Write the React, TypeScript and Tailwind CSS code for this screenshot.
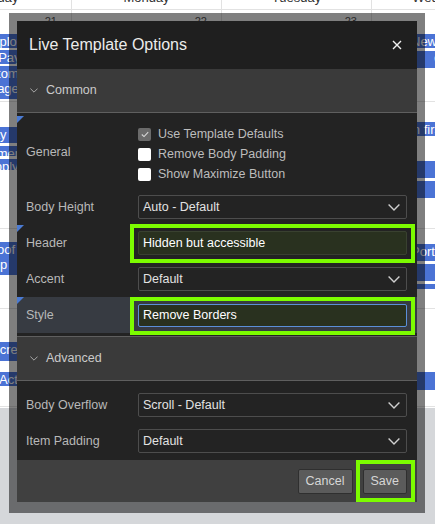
import React from 'react';

type Ev = { text: string; top: number; h: number; pl: number; lines?: string[] };

// week rows of the calendar behind the dialog, only the edges peek out
const weeks: { h: number; days: string[]; left: Ev[]; right: Ev[] }[] = [
    {
        h: 92,
        days: ['21', '22', '23', '24'],
        left: [
            { text: 'Employee', top: 10, h: 15, pl: 56 },
            { text: 'Unit of Pay', top: 1, h: 15, pl: 33 },
            { text: '', top: 1, h: 34, pl: 50, lines: ['Customer', 'Engaged'] },
        ],
        right: [
            { text: 'New Customer', top: 10, h: 15, pl: 37 },
            { text: 'Onboarding', top: 2, h: 18, pl: 60 },
        ],
    },
    {
        h: 127,
        days: ['28', '29', '30', '31'],
        left: [
            { text: 'Pay', top: 11, h: 17, pl: 60 },
            { text: 'Summer', top: 2, h: 11, pl: 46 },
            { text: 'Apply', top: 2, h: 12, pl: 62 },
        ],
        right: [
            { text: 'Sign first', top: 6, h: 15, pl: 20 },
            { text: 'Review', top: 24, h: 18, pl: 70 },
            { text: 'Update', top: 2, h: 18, pl: 70 },
        ],
    },
    {
        h: 80,
        days: ['4', '5', '6', '7'],
        left: [{ text: '', top: -1, h: 34, pl: 60, lines: ['Proof of n', 'App'] }],
        right: [
            { text: 'Portal', top: 1, h: 18, pl: 37 },
            { text: 'Launch', top: 2, h: 18, pl: 70 },
            { text: 'Meet', top: 2, h: 6, pl: 70 },
        ],
    },
    {
        h: 98,
        days: ['11', '12', '13', '14'],
        left: [
            { text: 'Screen', top: 19, h: 20, pl: 67 },
            { text: 'Action s', top: 10, h: 15, pl: 75 },
        ],
        right: [{ text: 'Renewal', top: 49, h: 19, pl: 70 }],
    },
];

const EventBar = ({ ev }: { ev: Ev }) => (
    <div
        className="mx-[2px] bg-[#4b73d5] text-white text-[13px] leading-[15px] overflow-hidden whitespace-nowrap border-b border-white"
        style={{ marginTop: ev.top, height: ev.h, paddingLeft: ev.pl }}
    >
        {ev.lines ? ev.lines.map((l) => <div key={l}>{l}</div>) : ev.text}
    </div>
);

const Calendar = () => (
    <div className="bg-white h-[408px] overflow-hidden">
        <div className="grid grid-cols-[150px_150px_150px_150px] ml-[-78px] h-[10px] overflow-hidden border-b border-[#e2e2e2]">
            {['Sunday', 'Monday', 'Tuesday', 'Wednesday'].map((d) => (
                <div key={d} className="border-r border-[#e2e2e2] text-center text-[13px] leading-[16px] text-[#333] -mt-[10px]">
                    {d}
                </div>
            ))}
        </div>
        {weeks.map((w, i) => (
            <div
                key={i}
                className="grid grid-cols-[150px_150px_150px_150px] ml-[-78px] border-b border-[#e2e2e2]"
                style={{ height: w.h }}
            >
                {[0, 1, 2, 3].map((c) => (
                    <div key={c} className="border-r border-[#e2e2e2] flex flex-col">
                        <div className="h-[14px] text-right pr-[14px] pt-[5px] text-[11px] leading-[12px] text-[#555]">{w.days[c]}</div>
                        {c === 0 && w.left.map((ev, k) => <EventBar key={k} ev={ev} />)}
                        {c === 3 && w.right.map((ev, k) => <EventBar key={k} ev={ev} />)}
                    </div>
                ))}
            </div>
        ))}
    </div>
);

const Chevron = ({ className }: { className: string }) => (
    <svg viewBox="0 0 12 7" className={className} fill="none" stroke="currentColor" strokeWidth="1.4">
        <path d="M0.6 0.6 L6 6 L11.4 0.6" />
    </svg>
);

const Marker = () => (
    <div className="absolute top-0 left-0 w-0 h-0 border-t-[7px] border-r-[7px] border-t-[#4b7bd3] border-r-transparent" />
);

const Highlight = () => (
    <div className="absolute -left-[8px] -right-[8px] -top-[7px] -bottom-[8px] border-4 border-[#7cfc00] pointer-events-none" />
);

const Select = ({ value }: { value: string }) => (
    <div className="h-[24px] border border-[#4d4d4d] rounded-[2px] bg-[#232323] flex items-center justify-between pl-[4px] pr-[6px] text-[12.5px] text-[#e2e2e2]">
        <span>{value}</span>
        <Chevron className="w-[12px] h-[7px] text-[#cfcfcf]" />
    </div>
);

const Row = ({ label, marker, active, children }: { label: string; marker?: boolean; active?: boolean; children: React.ReactNode }) => (
    <div className={`relative h-[36px] flex items-center ${active ? 'bg-[#373b42]' : ''}`}>
        {marker && <Marker />}
        <div className="w-[121px] pl-[9px] text-[12.5px] text-[#b8b8b8]">{label}</div>
        <div className="flex-1 pr-[10px]">{children}</div>
    </div>
);

const Check = ({ label, checked }: { label: string; checked?: boolean }) => (
    <div className="h-[20px] flex items-center gap-[7px]">
        {checked ? (
            <div className="w-[13px] h-[13px] rounded-[2px] bg-[#6b6b6b] flex items-center justify-center">
                <svg viewBox="0 0 10 8" className="w-[8px] h-[7px]" fill="none" stroke="#dadada" strokeWidth="1.3">
                    <path d="M1 4 L3.8 6.6 L9 1" />
                </svg>
            </div>
        ) : (
            <div className="w-[13px] h-[13px] rounded-[2px] bg-white" />
        )}
        <span className="text-[12.5px] text-[#bdbdbd]">{label}</span>
    </div>
);

const Section = ({ title }: { title: string }) => (
    <div className="h-[44px] bg-[#3a3a3a] flex items-center pl-[13px] gap-[8px] border-b border-[#5f5f5f]">
        <Chevron className="w-[8px] h-[5px] text-[#b0b0b0]" />
        <span className="text-[12.5px] text-[#cacaca]">{title}</span>
    </div>
);

export default function App() {
    return (
        <div className="relative w-[435px] h-[524px] overflow-hidden bg-[#d5d7da] font-['Liberation_Sans',Arial,sans-serif]">
            <Calendar />

            {/* modal wrapper */}
            <div className="absolute left-[9px] top-[13px] w-[416px] h-[500px] bg-black/50 pt-[8px] px-[8px]">
                <div className="w-[400px] bg-[#232323] flex flex-col">
                    <div className="h-[48px] bg-[#1f1f1f] flex items-center justify-between pl-[12px] pr-[15px]">
                        <span className="text-[16px] text-[#ececec]">Live Template Options</span>
                        <svg viewBox="0 0 10 10" className="w-[10px] h-[10px]" stroke="#f2f2f2" strokeWidth="1.4">
                            <path d="M1 1 L9 9 M9 1 L1 9" />
                        </svg>
                    </div>

                    <Section title="Common" />
                    <div className="pt-[3px] pb-[3px] border-b border-[#5f5f5f]">
                        <div className="relative h-[73px] flex items-center">
                            <Marker />
                            <div className="w-[121px] pl-[9px] text-[12.5px] text-[#b8b8b8]">General</div>
                            <div className="flex flex-col pt-[3px]">
                                <Check label="Use Template Defaults" checked />
                                <Check label="Remove Body Padding" />
                                <Check label="Show Maximize Button" />
                            </div>
                        </div>
                        <Row label="Body Height">
                            <Select value="Auto - Default" />
                        </Row>
                        <Row label="Header" marker>
                            <div className="relative">
                                <div className="h-[24px] border border-[#394130] rounded-[2px] bg-[#29311f] flex items-center pl-[4px] text-[12.5px] text-white">
                                    Hidden but accessible
                                </div>
                                <Highlight />
                            </div>
                        </Row>
                        <Row label="Accent">
                            <Select value="Default" />
                        </Row>
                        <Row label="Style" marker active>
                            <div className="relative">
                                <div className="h-[23px] border border-[#5b8fd8] rounded-[2px] bg-[#29311f] flex items-center pl-[4px] text-[12.5px] text-white">
                                    Remove Borders
                                </div>
                                <Highlight />
                            </div>
                        </Row>
                    </div>

                    <Section title="Advanced" />
                    <div className="pt-[6px] pb-[1px]">
                        <Row label="Body Overflow">
                            <Select value="Scroll - Default" />
                        </Row>
                        <Row label="Item Padding">
                            <Select value="Default" />
                        </Row>
                    </div>

                    <div className="h-[42px] bg-[#404040] flex items-center justify-end gap-[10px] pr-[10px]">
                        <button className="h-[25px] px-[7px] bg-[#5b5b5b] border border-[#2f2f2f] rounded-[2px] text-[12.5px] text-[#d6d6d6]">
                            Cancel
                        </button>
                        <div className="relative">
                            <button className="h-[25px] px-[7px] bg-[#5b5b5b] border border-[#2f2f2f] rounded-[2px] text-[12.5px] text-[#d6d6d6]">
                                Save
                            </button>
                            <div className="absolute -left-[7px] -right-[8px] -top-[8px] -bottom-[8px] border-4 border-[#7cfc00]" />
                        </div>
                    </div>
                </div>
            </div>
        </div>
    );
}
